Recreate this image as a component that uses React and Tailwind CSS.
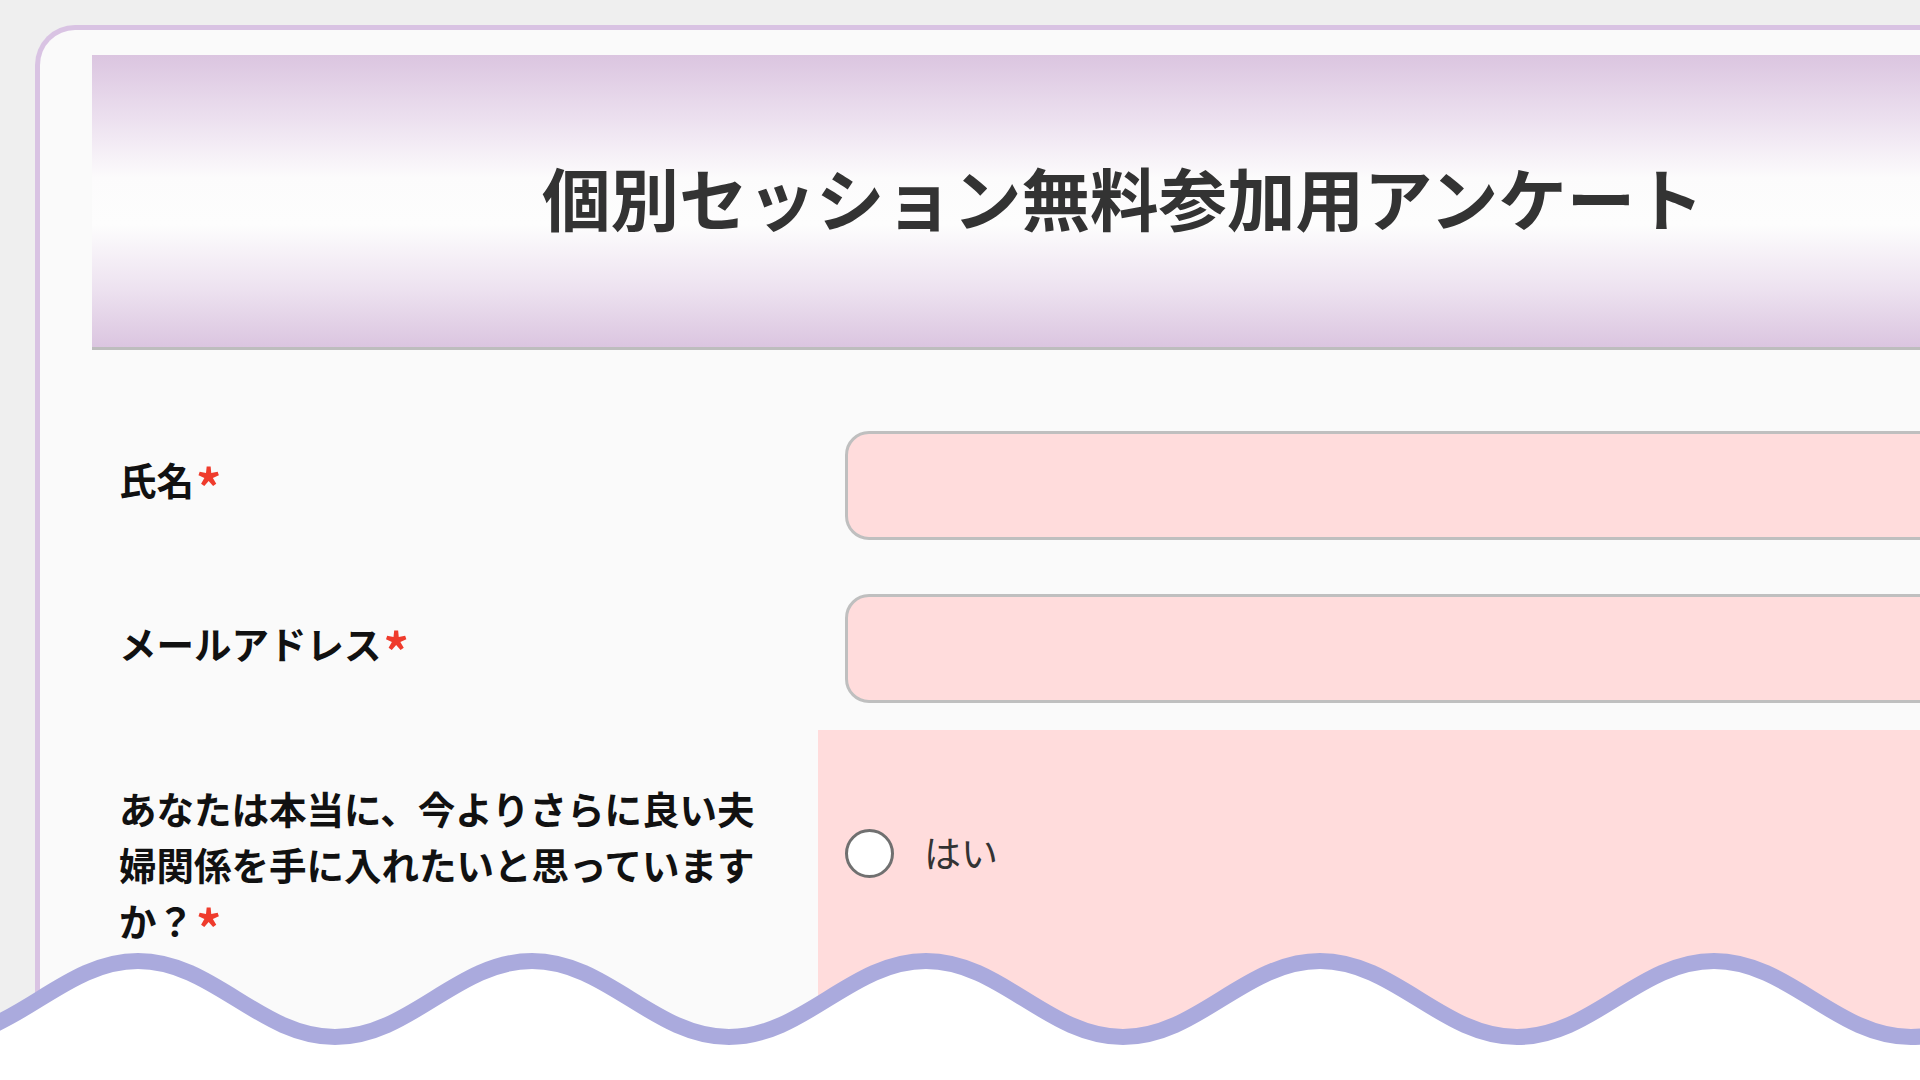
import React from "react";

// 波線: 山は x=138 から 394px ごと、中心線 y=59（svg 内）、振幅 38
function wavePath(closed) {
  const period = 394;
  const half = period / 2;
  const top = 21;
  const bottom = 97;
  let x = 138 - period;
  let d = `M ${x} ${top}`;
  let up = true;
  while (x < 2150) {
    const y0 = up ? top : bottom;
    const y1 = up ? bottom : top;
    d += ` C ${x + half * 0.38} ${y0}, ${x + half * 0.62} ${y1}, ${x + half} ${y1}`;
    x += half;
    up = !up;
  }
  if (closed) d += ` L ${x} 160 L ${138 - period} 160 Z`;
  return d;
}

function Required() {
  return (
    <span className="text-[#ef3b2c] text-[50px] leading-[0] align-[-12px] ml-[2px]">*</span>
  );
}

function Wave() {
  return (
    <svg
      className="absolute left-0 bottom-0"
      width="1920"
      height="140"
      viewBox="0 0 1920 140"
    >
      <path d={wavePath(true)} fill="#ffffff" />
      <path d={wavePath(false)} fill="none" stroke="#aaaadd" strokeWidth="16" />
    </svg>
  );
}

export default function App() {
  return (
    <div className="relative w-[1920px] h-[1080px] overflow-hidden bg-[#efefef] font-['Noto_Sans_CJK_JP','Noto_Sans',sans-serif]">
      <div className="pt-[25px] pl-[35px]">
        <div className="w-[2250px] h-[1200px] rounded-tl-[40px] border-l-[5px] border-t-[5px] border-[#d9c3e3] bg-[#fafafa] pt-[25px] pl-[52px]">
          {/* ヘッダー */}
          <div className="w-[2062px] h-[295px] border-b-[3px] border-[#bdbdbd] bg-[linear-gradient(180deg,#dbc5e0_0%,#ece0ef_22%,#fcfbfc_42%,#fdfdfd_58%,#ede2f0_80%,#dbc5e0_100%)] flex items-center justify-center pb-[8px]">
            <h1 className="text-[68.5px] font-bold text-[#333333] leading-none tracking-normal">
              個別セッション無料参加用アンケート
            </h1>
          </div>

          {/* フォーム */}
          <div className="mt-[54px] w-[2062px] grid grid-cols-[726px_1fr]">
            <div className="pl-[27px] pb-[12px] flex items-center text-[37.5px] font-bold text-[#111111]">
              <span>
                氏名
                <Required />
              </span>
            </div>
            <div className="pl-[27px] py-[27px]">
              <div className="h-[109px] rounded-[24px] border-[3px] border-[#bfbfbf] bg-[#ffdcdc]" />
            </div>

            <div className="pl-[27px] pb-[10px] flex items-center text-[37.5px] font-bold text-[#111111]">
              <span>
                メールアドレス
                <Required />
              </span>
            </div>
            <div className="pl-[27px] py-[27px]">
              <div className="h-[109px] rounded-[24px] border-[3px] border-[#bfbfbf] bg-[#ffdcdc]" />
            </div>

            <div className="pl-[27px] pr-[60px] pt-[50px] h-[400px] text-[37.5px] leading-[56px] font-bold text-[#111111]">
              <p>
                あなたは本当に、今よりさらに良い夫婦関係を手に入れたいと思っていますか？
                <Required />
              </p>
            </div>
            <div className="bg-[#ffdcdc] pl-[27px] pt-[95px] h-[400px]">
              <label className="flex items-center h-[56px] gap-[30px]">
                <span className="w-[49px] h-[49px] rounded-full border-[3px] border-[#707070] bg-white" />
                <span className="text-[37px] text-[#333333]">はい</span>
              </label>
            </div>
          </div>
        </div>
      </div>
      <Wave />
    </div>
  );
}
